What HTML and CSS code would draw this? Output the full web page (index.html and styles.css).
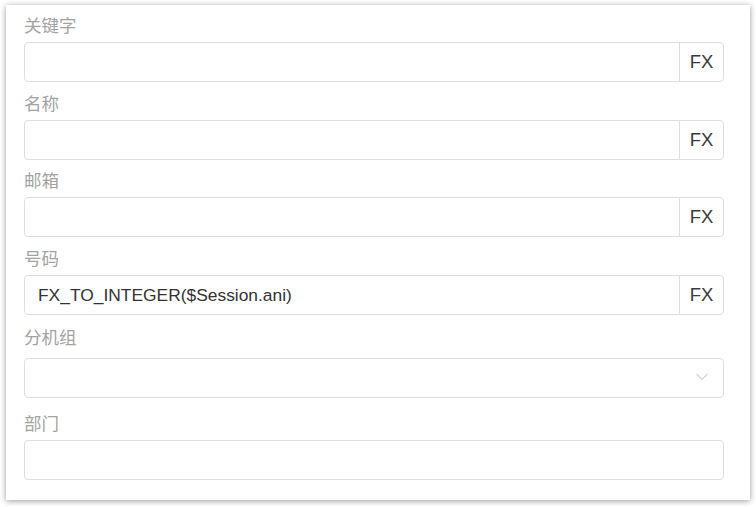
FILE: index.html
```html
<!DOCTYPE html>
<html lang="zh">
<head>
<meta charset="utf-8">
<link rel="stylesheet" href="styles.css">
</head>
<body>
<div class="card">
  <div class="group g1">
    <div class="label">关键字</div>
    <div class="field"><div class="input"></div><div class="addon">FX</div></div>
  </div>
  <div class="group g2">
    <div class="label">名称</div>
    <div class="field"><div class="input"></div><div class="addon">FX</div></div>
  </div>
  <div class="group g3">
    <div class="label">邮箱</div>
    <div class="field"><div class="input"></div><div class="addon">FX</div></div>
  </div>
  <div class="group g2">
    <div class="label">号码</div>
    <div class="field"><div class="input">FX_TO_INTEGER($Session.ani)</div><div class="addon">FX</div></div>
  </div>
  <div class="group g5">
    <div class="label l5">分机组</div>
    <div class="field select"><div class="input"></div>
      <svg class="chev" width="14" height="8" viewBox="0 0 14 8"><path d="M1.5 1 L7 6.5 L12.5 1" fill="none" stroke="#d4d4d4" stroke-width="1.2"/></svg>
    </div>
  </div>
  <div class="group g6">
    <div class="label">部门</div>
    <div class="field"><div class="input"></div></div>
  </div>
</div>
</body>
</html>
```
FILE: styles.css
```css
html { height: 100%; }
html, body { margin: 0; background: #fff; }
body {
  font-family: "Liberation Sans", "Noto Sans CJK SC", sans-serif;
  height: 100%;
  box-sizing: border-box;
  padding: 5px 6px 7px 6px;
  display: flex;
  flex-direction: column;
  overflow: hidden;
}
.card {
  flex: 1;
  width: 744px;
  box-sizing: border-box;
  background: #fff;
  box-shadow: 0 1px 6px rgba(0,0,0,0.4);
  padding: 9px 26px 0 18px;
}
.group { display: flex; flex-direction: column; }
.g2 { margin-top: 10px; }
.g3 { margin-top: 9px; }
.g5 { margin-top: 11px; }
.g6 { margin-top: 14px; }
.label {
  font-family: "Noto Sans CJK SC", sans-serif;
  font-size: 17.5px;
  line-height: 22px;
  height: 22px;
  color: #a3a3a3;
  margin-bottom: 6px;
}
.l5 { margin-bottom: 10px; }
.field {
  display: flex;
  height: 40px;
  box-sizing: border-box;
  border: 1px solid #dedede;
  border-radius: 4px;
  position: relative;
}
.input {
  flex: 1;
  padding-left: 13px;
  font-size: 17.4px;
  line-height: 38px;
  color: #333;
}
.addon {
  width: 43px;
  border-left: 1px solid #dedede;
  font-size: 18.5px;
  line-height: 38px;
  text-align: center;
  color: #3b3b3b;
}
.chev { position: absolute; right: 14px; top: 14px; }
```
